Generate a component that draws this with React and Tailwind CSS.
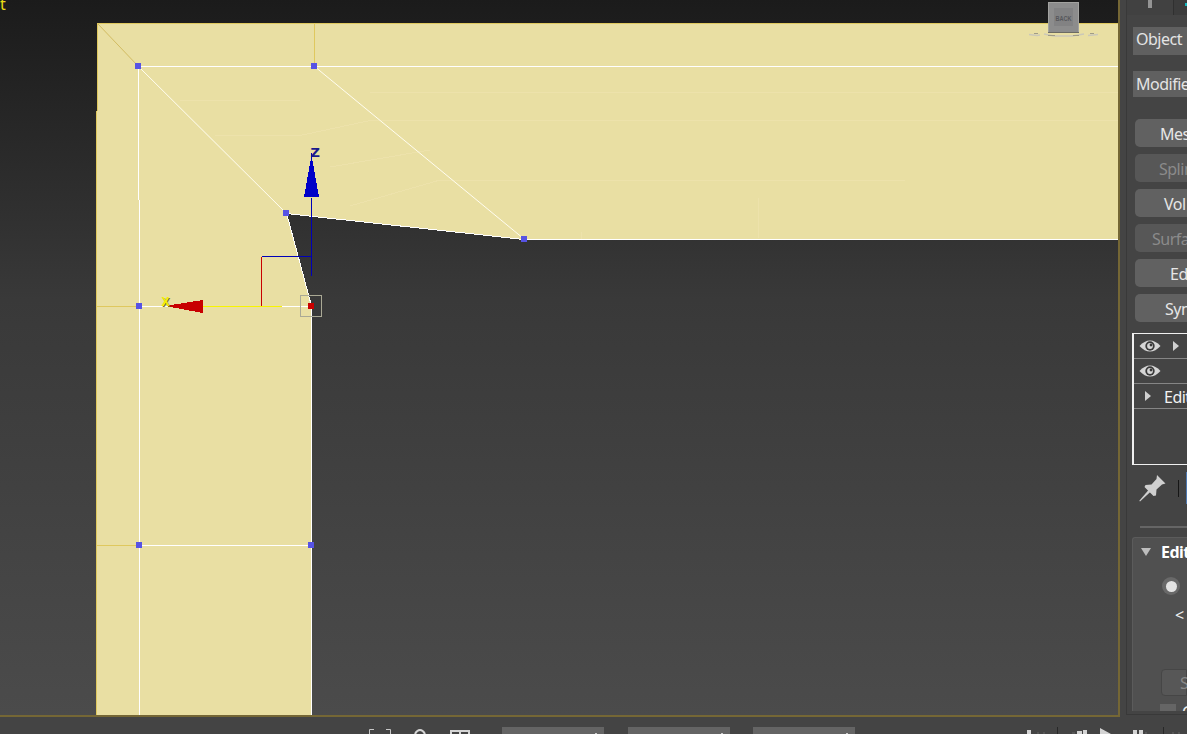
import React from "react";

const VERTICES = [
  [138, 66],
  [314, 66],
  [286, 213],
  [524, 239],
  [139, 306],
  [139, 545],
  [311, 545],
];

const MODIFIERS = [
  { label: "Mes", pad: "pl-[25px]", on: true },
  { label: "Splin", pad: "pl-6", on: false },
  { label: "Vol", pad: "pl-[29px]", on: true },
  { label: "Surfa", pad: "pl-[17px]", on: false },
  { label: "Ed", pad: "pl-[35px]", on: true },
  { label: "Syn", pad: "pl-[30px]", on: true },
];

function Scene() {
  return (
    <svg className="block h-[715px] w-[1118px]" viewBox="0 0 1118 715" shapeRendering="crispEdges">
      <path d="M97 23H1118V239H524L286 213L311 306V715H96V111H97Z" fill="#e9dfa3" />
      <g fill="none" stroke="#eee2ae" strokeWidth="1" opacity="0.7">
        <path d="M180 100.500H300M370 92.500H1118M215 135.500H300L370 120.500H1118M330 167L430 150M350 206L440 180H905M758.500 198V238M581.500 232V239" />
      </g>
      <g fill="none" stroke="#dfc85e" strokeWidth="1">
        <path d="M97.500 111V23.500H1118M96.500 111V715M314.500 24V66M97 306.500H139M97 545.500H139" />
        <path d="M98 24L138 66" shapeRendering="auto" stroke="#d2bc62" />
      </g>
      <g fill="none" stroke="#ffffff" strokeWidth="1">
        <path d="M138 66.500H1118M138.500 66V200M139.500 200V715M139 306.500H311M139 545.500H311M311.500 306V715M524 239.500H1118" />
        <path d="M286 213.500L524 239.500M286.500 213L311.500 306" />
        <path d="M138 66L286 213M314 66L524 239" shapeRendering="auto" stroke="#fffdf0" />
      </g>
      <rect x="203" y="306" width="79" height="1" fill="#f8f400" />
      <rect x="261" y="257" width="1" height="49" fill="#c80000" />
      <rect x="262" y="256" width="50" height="1" fill="#0000b8" />
      <rect x="311" y="198" width="1" height="78" fill="#0000b8" />
      <rect x="311" y="153" width="1" height="10" fill="#0000b8" />
      <path d="M311 158H312L319 197H304Z" fill="#0000c8" />
      <path d="M165 306L203 300V313Z" fill="#c80000" />
      <text x="310.500" y="157" fill="#1a1a8c" fontFamily="DejaVu Sans, sans-serif" fontSize="13" fontWeight="700">Z</text>
      <text x="162.500" y="306.500" fill="#77751c" fontFamily="Liberation Sans, sans-serif" fontSize="12" fontWeight="700">X</text>
      <text x="161.500" y="306" fill="#f5f200" fontFamily="Liberation Sans, sans-serif" fontSize="12" fontWeight="700">X</text>
      {VERTICES.map(([x, y]) => (
        <rect key={`${x}-${y}`} x={x - 3} y={y - 3} width="6" height="6" fill="#5753e4" />
      ))}
      <rect x="308" y="303" width="6" height="6" fill="#c80000" />
      <rect x="300.500" y="295.500" width="21" height="21" fill="none" stroke="#aaa995" />
      <g>
        <rect x="1048.500" y="2.500" width="30" height="30" fill="#8c8c8c" stroke="#a3a3a0" />
        <rect x="1054" y="8" width="19" height="18" fill="#828283" />
        <rect x="1048" y="32" width="31" height="1" fill="#6c6b64" />
        <g fill="none" shapeRendering="auto">
          <path d="M1029 34.500L1037 35.500L1040 35M1044 34L1054 36H1072L1084 34M1088 35.500L1098 34.500" stroke="#cbc8b8" strokeWidth="1.500" />
          <path d="M1034 33.500H1038M1048 35.500H1055M1073 35.500H1079M1090 33.500H1094" stroke="#a09c86" />
        </g>
        <text x="1055.500" y="20.500" fill="#56575b" fontFamily="Liberation Sans, sans-serif" fontSize="8" fontWeight="700" textLength="16" lengthAdjust="spacingAndGlyphs">BACK</text>
      </g>
    </svg>
  );
}

function EyeIcon() {
  return (
    <svg className="h-3 w-[22px] shrink-0" viewBox="0 0 22 12">
      <path d="M.5 6Q5.500.5 11 .5T21.500 6Q16.500 11.500 11 11.500T.5 6Z" fill="#d5d5d5" />
      <circle cx="11" cy="6" r="4.700" fill="#393939" />
      <circle cx="11" cy="6" r="2.900" fill="#d5d5d5" />
      <circle cx="12" cy="5" r="1.400" fill="#393939" />
    </svg>
  );
}

function Arrow() {
  return (
    <svg className="h-[10px] w-[6px] shrink-0" viewBox="0 0 6 10">
      <path d="M0 0L6 5L0 10Z" fill="#d0d0d0" />
    </svg>
  );
}

function ModifierStack() {
  return (
    <div className="mt-[11px] ml-[5px] flex h-[132px] flex-col border-y border-l-2 border-[#f0f0f0] text-[#f2f2f2]">
      <div className="flex h-[25px] shrink-0 items-center gap-3 border-b border-[#858585] pl-[5px]">
        <EyeIcon />
        <Arrow />
      </div>
      <div className="flex h-[25px] shrink-0 items-center border-b border-[#858585] pl-[5px]">
        <EyeIcon />
      </div>
      <div className="flex h-[25px] shrink-0 items-center gap-[13px] border-b border-[#858585] pl-[11px]">
        <Arrow />
        <span className="pt-px leading-none whitespace-nowrap">Edit</span>
      </div>
    </div>
  );
}

function StackTools() {
  return (
    <div className="mt-[7px] ml-3 flex h-8 items-center">
      <svg className="h-7 w-[27px] shrink-0" viewBox="0 0 27 28">
        <path d="M.3 26.800L9.500 16L11.300 18L1 27.500Z" fill="#cfcfcf" />
        <path d="M18 1L26.500 9.500L23 10.500L17.500 15.500L17 21.500L14.500 22L5.500 13L6.500 11L12.500 10.500L17.500 5Z" fill="#cfcfcf" />
      </svg>
      <div className="ml-[12px] h-[17px] w-px shrink-0 bg-[#161616]" />
      <div className="ml-[7px] h-8 w-[30px] shrink-0 bg-[#4d78b0]" />
    </div>
  );
}

function Rollout() {
  return (
    <div className="mt-[9px] ml-[5px] h-[174px] overflow-hidden rounded-tl-[3px] border-t border-l border-[#5b5b5b] bg-[#505050] whitespace-nowrap">
      <div className="flex h-7 items-center gap-[10px] pl-[8px]">
        <svg className="h-2 w-[10px] shrink-0" viewBox="0 0 10 8">
          <path d="M0 0H10L5 8Z" fill="#bdbdbd" />
        </svg>
        <span className="font-bold text-white">Edit</span>
      </div>
      <div className="ml-[29px] mt-[11px] flex size-[18px] items-center justify-center rounded-full bg-[#696969]">
        <div className="size-[11px] rounded-full bg-[#e3e3e3]" />
      </div>
      <div className="mt-[10px] ml-[42px] h-5 leading-5 text-[#eeeeee]">&lt;</div>
      <div className="mt-[44px] ml-[28px] flex h-[27px] items-center rounded-tl-[4px] rounded-bl-[4px] border border-[#464646] bg-[#575757] pl-[18px] text-[#898989]">S</div>
      <div className="mt-[8px] ml-[27px] flex h-5">
        <div className="size-4 shrink-0 bg-[#656565]" />
        <span className="-mt-[2px] ml-[6px] leading-5 text-[#eeeeee]">C</span>
      </div>
    </div>
  );
}

function CommandPanel() {
  return (
    <aside className="flex w-[67px] shrink-0 overflow-hidden bg-[#444444] pl-1.5">
      <div className="h-[715px] w-[61px] shrink-0 overflow-hidden border-b border-l border-[#393939] font-['Noto_Sans','Open_Sans',sans-serif] text-base tracking-[-0.5px]">
        <div className="flex h-[15px] bg-[#3c3c3c]">
          <div className="flex w-[47px] shrink-0 justify-center border-r border-[#303030] bg-[#414141]">
            <div className="h-2 w-1 bg-[#949494]" />
          </div>
          <div className="mt-[3px] ml-[11px] h-[3px] w-1 shrink-0 bg-[#16b9c1]" />
        </div>
        <div className="mt-3 ml-[6px] flex h-7 items-start bg-[#606060] pl-[3px] leading-6 whitespace-nowrap text-[#e4e4e4]">Object</div>
        <div className="mt-4 ml-[6px] flex h-[26px] items-center bg-[#606060] pl-[3px] whitespace-nowrap text-[#e4e4e4]">Modifie</div>
        <div className="mt-[22px] ml-2 flex flex-col gap-[7px]">
          {MODIFIERS.map(({ label, pad, on }) => (
            <div key={label} className={`flex h-7 items-center overflow-hidden rounded-l-[5px] pt-0.5 whitespace-nowrap ${pad} ${on ? "bg-[#616161] text-[#e6e6e6]" : "bg-[#575757] text-[#8b8b8b]"}`}>{label}</div>
          ))}
        </div>
        <ModifierStack />
        <StackTools />
        <div className="mt-[22px] ml-[13px] h-[2px] bg-[#656565]" />
        <Rollout />
      </div>
    </aside>
  );
}

function StatusBar() {
  return (
    <footer className="flex h-[17px] items-end overflow-hidden bg-[#444444]">
      <svg className="ml-[369px] h-[5px] w-[101px] shrink-0" viewBox="0 0 101 5">
        <path d="M.5 5V.5H5M17 .5H21.500V5" fill="none" stroke="#c8c8c8" />
        <path d="M46 5Q48 1 51 1T56 5" fill="none" stroke="#d5d5d5" strokeWidth="2" />
        <path d="M82 5V2H100V5M91 2V5" fill="none" stroke="#d5d5d5" strokeWidth="2" />
      </svg>
      <div className="ml-8 flex w-[353px] shrink-0 justify-between">
        {[0, 1, 2].map((field) => (
          <div key={field} className="flex h-[7px] w-[102px] items-end justify-end bg-[#646464] pr-[7px]">
            <div className="h-px w-[2px] bg-[#cccccc]" />
          </div>
        ))}
      </div>
      <svg className="ml-[172px] h-2 w-[160px] shrink-0" viewBox="0 0 160 8">
        <path d="M30.500 1V8M136.500 1V8" stroke="#282828" />
        <path d="M0 4H4V8H0ZM50 5H55V8H50ZM56 4H60V8H56ZM106 4H110V8H106ZM112 4H116V8H112ZM73 2L84 8H73Z" fill="#d4d4d4" />
        <path d="M10 7H12M16 7H18M45 7H48M118 7H120M145 7H147M151 7H153" stroke="#666666" />
      </svg>
    </footer>
  );
}

export default function App() {
  return (
    <div className="flex h-[734px] w-[1187px] flex-col overflow-hidden bg-[#444444]">
      <div className="flex h-[717px] shrink-0">
        <main className="relative w-[1120px] shrink-0 overflow-hidden border-r-2 border-b-2 border-[#756735] bg-linear-to-b from-[#1b1b1b] via-[#393939] via-42% to-[#4b4b4b]">
          <Scene />
          <span className="absolute -top-2 left-0 font-['Noto_Sans',sans-serif] text-[16px] leading-6 text-[#e9dc15]">t</span>
        </main>
        <CommandPanel />
      </div>
      <StatusBar />
    </div>
  );
}
